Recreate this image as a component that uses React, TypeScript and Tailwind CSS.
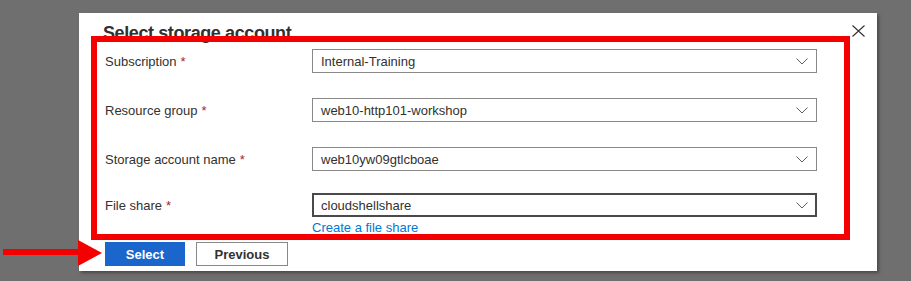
const font = { fontFamily: '"Liberation Sans", "Noto Sans", sans-serif' }

function Chevron() {
  return (
    <svg width="12" height="7" viewBox="0 0 12 7" fill="none" stroke="#605e5c" strokeWidth="1">
      <path d="M0.5 0.5 L6 6 L11.5 0.5" />
    </svg>
  )
}

function Dropdown({ value, focused }: { value: string; focused?: boolean }) {
  return (
    <div
      className={
        focused
          ? 'flex h-6 w-[505px] items-center justify-between border-2 border-[#4a4a4a] pl-[7px] pr-[7px]'
          : 'flex h-6 w-[505px] items-center justify-between border border-[#8a8886] pl-2 pr-2'
      }
    >
      <span className="pt-[1px] text-[13px] text-[#323130]">{value}</span>
      <Chevron />
    </div>
  )
}

function Label({ text }: { text: string }) {
  return (
    <div className="flex h-6 items-center pl-[2px] pt-[2px] text-[13px] text-[#323130]">
      {text}
      <span className="ml-1 text-[#a4262c]">*</span>
    </div>
  )
}

export default function App() {
  const rows = [
    { label: 'Subscription', value: 'Internal-Training', mb: 'mb-[25px]' },
    { label: 'Resource group', value: 'web10-http101-workshop', mb: 'mb-[25px]' },
    { label: 'Storage account name', value: 'web10yw09gtlcboae', mb: 'mb-[22px]' },
  ]

  return (
    <div className="relative h-[281px] w-[911px] overflow-hidden bg-[#6f6f6f] pl-[79px] pt-[13px]" style={font}>
      {/* Dialog */}
      <div className="relative h-[258px] w-[798px] bg-white px-6 shadow-[2px_2px_3px_rgba(0,0,0,0.35)]">
        <h1 className="h-[32px] pt-[8px] text-[18px] font-semibold leading-[24px] tracking-[-0.4px] text-[#323130]">
          Select storage account
        </h1>

        <button className="absolute right-3 top-3 text-[#323130]">
          <svg width="13" height="12" viewBox="0 0 13 12" stroke="#323130" strokeWidth="1.1">
            <path d="M0.5 0.5 L12.5 11.5 M12.5 0.5 L0.5 11.5" />
          </svg>
        </button>

        <div className="mt-[4px]">
          {rows.map((r) => (
            <div key={r.label} className={`flex ${r.mb}`}>
              <div className="w-[209px]">
                <Label text={r.label} />
              </div>
              <Dropdown value={r.value} />
            </div>
          ))}
          <div className="flex">
            <div className="w-[209px]">
              <Label text="File share" />
            </div>
            <div>
              <Dropdown value="cloudshellshare" focused />
              <a className="mt-[3px] block text-[13px] leading-4 text-[#0078d4]">Create a file share</a>
            </div>
          </div>
        </div>

        <div className="mt-[6px] flex gap-[11px] pl-[2px]">
          <button className="h-6 w-20 bg-[#1a66cc] pt-[2px] text-[13px] font-semibold text-white">Select</button>
          <button className="h-6 w-[92px] border border-[#8a8886] pt-[2px] text-[13px] font-semibold text-[#323130]">
            Previous
          </button>
        </div>
      </div>

      {/* Red highlight box */}
      <div className="absolute left-[91px] top-[36px] h-[204px] w-[759px] border-[6px] border-[#f40000]" />

      {/* Red arrow */}
      <svg className="absolute left-0 top-[238px]" width="106" height="30" viewBox="0 0 106 30">
        <rect x="3" y="11" width="78" height="6" fill="#f40000" />
        <polygon points="78,2 102,15 78,28" fill="#f40000" />
      </svg>
    </div>
  )
}
